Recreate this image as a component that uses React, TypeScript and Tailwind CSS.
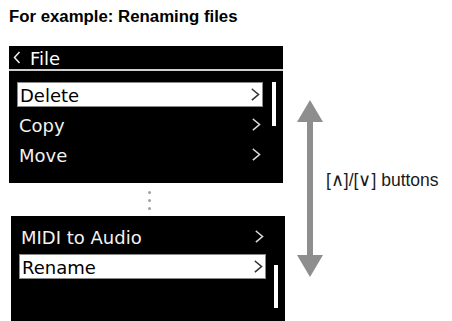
import React from "react";

const Chevron = ({ color }: { color: string }) => (
  <svg width="9" height="13" viewBox="0 0 9 13" className="shrink-0">
    <path d="M1.5 1.5 L7.5 6.5 L1.5 11.5" fill="none" stroke={color} strokeWidth="1.6" strokeLinecap="square" />
  </svg>
);

const Row = ({ label, selected, w }: { label: string; selected?: boolean; w: number }) => (
  <div
    className={
      "flex h-[25px] items-center justify-between pl-[2px] pr-[2px] " +
      (selected ? "bg-white border border-[#8a8a8a] text-black" : "text-[#f2f2f2]")
    }
    style={{ width: w }}
  >
    <span className="text-[18px] leading-[25px] pt-[1px]" style={{ fontFamily: '"DejaVu Sans", sans-serif' }}>
      {label}
    </span>
    <Chevron color={selected ? "#333" : "#d8d8d8"} />
  </div>
);

export default function App() {
  return (
    <div className="w-[452px] h-[321px] overflow-hidden bg-white">
      <h1
        className="pl-[9px] pt-[7px] text-[16.8px] leading-[19px] font-bold text-black"
        style={{ fontFamily: '"Liberation Sans", Arial, sans-serif' }}
      >
        For example: Renaming files
      </h1>
      <div className="mt-[20px] flex">
        <div className="w-[285px] flex flex-col">
          {/* top panel */}
          <div className="ml-[9px] w-[274px] h-[137px] bg-black flex flex-col">
            <div className="h-[23px] flex items-center pl-[4px] gap-[9px] text-white">
              <svg width="8" height="13" viewBox="0 0 8 13">
                <path d="M6.5 1 L1.5 6.5 L6.5 12" fill="none" stroke="#f2f2f2" strokeWidth="1.5" />
              </svg>
              <span className="text-[18px] leading-[23px] pt-[2px]" style={{ fontFamily: '"DejaVu Sans", sans-serif' }}>
                File
              </span>
            </div>
            <div className="h-[2px] bg-[#cfcfcf]" />
            <div className="mt-[11px] flex">
              <div className="ml-[8px] flex flex-col gap-[5px]">
                <Row label="Delete" selected w={246} />
                <Row label="Copy" w={246} />
                <Row label="Move" w={246} />
              </div>
              <div className="ml-[9px] w-[4px] h-[44px] bg-white" />
            </div>
          </div>
          {/* dots */}
          <div className="h-[33px] ml-[148px] pt-[8px] flex flex-col gap-[5px]">
            <div className="w-[3px] h-[3px] rounded-full bg-[#a0a0a0]" />
            <div className="w-[3px] h-[3px] rounded-full bg-[#a0a0a0]" />
            <div className="w-[3px] h-[3px] rounded-full bg-[#a0a0a0]" />
          </div>
          {/* bottom panel */}
          <div className="ml-[11px] w-[274px] h-[120px] bg-black pt-[8px] flex">
            <div className="ml-[8px] flex flex-col gap-[5px]">
              <Row label="MIDI to Audio" w={247} />
              <Row label="Rename" selected w={247} />
            </div>
            <div className="ml-[8px] mt-[41px] w-[4px] h-[43px] bg-white" />
          </div>
        </div>
        <svg width="26" height="177" viewBox="0 0 26 177" className="ml-[12px] mt-[54px] shrink-0">
          <polygon points="13,0 26,22 16,22 16,155 26,155 13,177 0,155 10,155 10,22 0,22" fill="#8e8e8e" />
        </svg>
        <div
          className="ml-[3px] mt-[125px] text-[17.5px] leading-[18px] text-[#1a1a1a] whitespace-nowrap"
          style={{ fontFamily: '"Liberation Sans", Arial, sans-serif' }}
        >
          [∧]/[∨] buttons
        </div>
      </div>
    </div>
  );
}
